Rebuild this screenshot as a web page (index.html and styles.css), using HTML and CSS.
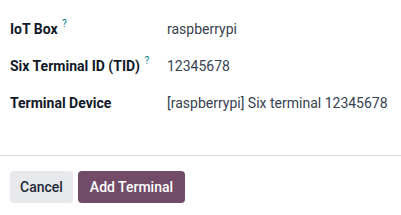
FILE: index.html
```html
<!DOCTYPE html>
<html lang="en">
<head>
  <meta charset="UTF-8" />
  <title>Add Terminal</title>
  <link rel="stylesheet" href="styles.css">
</head>
<body>
  <div class="form">
    <div class="label">IoT Box <sup class="help">?</sup></div>
    <div class="value">raspberrypi</div>

    <div class="label">Six Terminal ID (TID) <sup class="help">?</sup></div>
    <div class="value">12345678</div>

    <div class="label">Terminal Device</div>
    <div class="value">[raspberrypi] Six terminal 12345678</div>
  </div>

  <div class="footer">
    <button class="btn btn-secondary">Cancel</button>
    <button class="btn btn-primary">Add Terminal</button>
  </div>
</body>
</html>
```

FILE: styles.css
```css
body {
  margin: 0;
  font-family: Roboto, "Liberation Sans", sans-serif;
  font-size: 14px;
  color: #374151;
  background-color: white;
}

.form {
  display: grid;
  grid-template-columns: 157px 1fr;
  row-gap: 17px;
  padding: 19px 10px 42px;
  line-height: 20px;
}

.label {
  font-weight: bold;
  color: #111827;
}

.help {
  color: #017e84;
  font-size: 10px;
  font-weight: normal;
  margin-left: 1px;
  vertical-align: 7px;
  line-height: 0;
}

.value {
  color: #374151;
}

.footer {
  border-top: 1px solid #d8dadd;
  padding: 15px 10px 12px;
  display: flex;
  gap: 5px;
}

.btn {
  font-family: Roboto, "Liberation Sans", sans-serif;
  font-size: 14px;
  font-weight: 500;
  height: 32px;
  padding: 0 10px;
  border: none;
  border-radius: 4px;
}

.btn-secondary {
  background-color: #e7e9ed;
  color: #1f2937;
}

.btn-primary {
  background-color: #714b67;
  color: white;
  padding: 0 12px;
}
```
